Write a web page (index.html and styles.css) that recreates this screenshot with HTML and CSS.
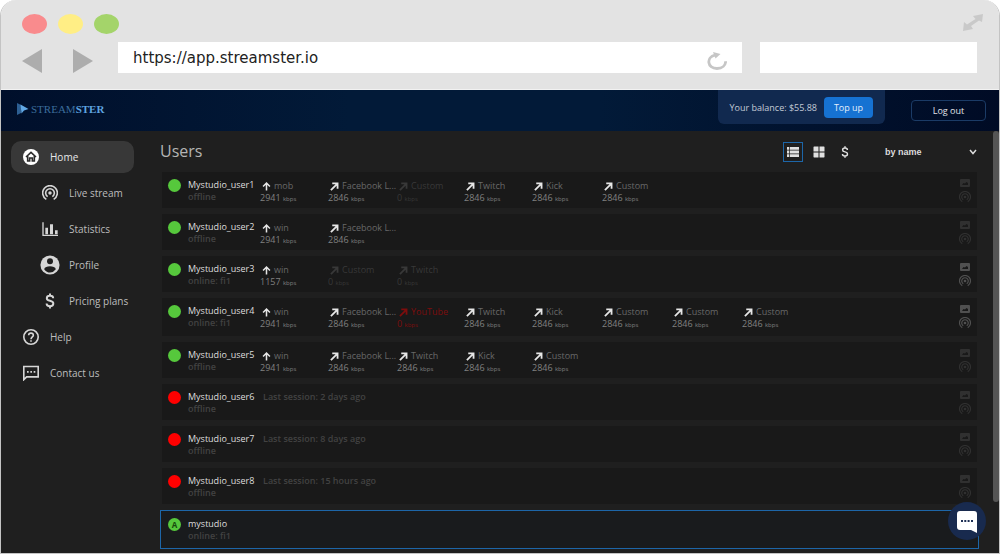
FILE: index.html
```html
<!DOCTYPE html>
<html lang="en">
<head>
  <meta charset="UTF-8">
  <meta name="viewport" content="width=device-width, initial-scale=1.0">
  <title>Streamster - Users</title>
  <link rel="stylesheet" href="styles.css">
</head>
<body>
  <svg class="sprite" aria-hidden="true">
    <symbol id="up" viewBox="0 0 10 10"><path d="M5 9.5V1.5M1.2 5L5 1.2L8.8 5" fill="none" stroke="currentColor" stroke-width="1.7"/></symbol>
    <symbol id="out" viewBox="0 0 10 10"><path d="M1 9L8 2M2.5 1.6H8.4V7.5" fill="none" stroke="currentColor" stroke-width="2"/></symbol>
    <symbol id="cast" viewBox="0 0 24 24"><path d="M6.500 21.500A11 11 0 1 1 17.500 21.500M8.500 17.500A6.500 6.500 0 1 1 15.500 17.500" fill="none" stroke="currentColor" stroke-width="2.400"/><circle cx="12" cy="12" r="2.600" fill="currentColor"/></symbol>
    <symbol id="picture" viewBox="0 0 20 16"><path fill="currentColor" fill-rule="evenodd" d="M2 0H18Q20 0 20 2V14Q20 16 18 16H2Q0 16 0 14V2Q0 0 2 0ZM4 12H16V8L13 6L10 9L7 8Z"/></symbol>
    <symbol id="dollar" viewBox="0 0 12 20"><path d="M10 6.500C10 4.200 8.300 3.500 6 3.500S2 4.500 2 6.500C2 11 10.200 8.500 10.200 13.200C10.200 15.500 8.300 16.500 6 16.500S1.700 15.500 1.700 13.200M6 .5V4M6 16V19.500" fill="none" stroke="currentColor" stroke-width="2.500"/></symbol>
  </svg>

  <div class="window">
    <div class="chrome">
      <div class="chrome-top">
        <div class="dots">
          <span class="dot dot-red"></span>
          <span class="dot dot-yellow"></span>
          <span class="dot dot-green"></span>
        </div>
        <svg class="expand" viewBox="0 0 20 17"><path fill="#c9c9c9" d="M10 2L20 0L19 8L16 6.500L8 12L10 15L0 17L1 8L4 10.500L12.500 5Z"/></svg>
      </div>
      <div class="chrome-bar">
        <button class="nav-arrow" aria-label="Back"><svg viewBox="0 0 20 24"><path d="M20 0V24L0 12Z" fill="#adadad"/></svg></button>
        <button class="nav-arrow" aria-label="Forward"><svg viewBox="0 0 20 24"><path d="M0 0V24L20 12Z" fill="#adadad"/></svg></button>
        <div class="address">
          <input type="text" aria-label="Address" value="https://app.streamster.io">
          <button class="reload" aria-label="Reload"><svg viewBox="0 0 20 18"><path d="M8 3.200C-1 5 0 16.500 10 16.500C15.500 16.500 18.500 13 18.700 9.200" fill="none" stroke="#c6c6c6" stroke-width="2.800"/><path d="M6 0L13.500 2L8.500 6.500Z" fill="#c6c6c6"/></svg></button>
        </div>
        <input class="search" type="text" aria-label="Search">
      </div>
    </div>

    <header class="header">
      <a class="logo" href="#">
        <svg viewBox="0 0 12 12"><path d="M0 0L4 2V10L0 12Z" fill="#2d5f93"/><path d="M3.500 1.500L11.500 6L7 7.500L4.500 10.500Z" fill="#62a9e6"/></svg>
        <span class="logo-text">STREAM<b>STER</b></span>
      </a>
      <div class="balance">
        <span>Your balance: $55.88</span>
        <button class="top-up">Top up</button>
      </div>
      <button class="log-out">Log out</button>
    </header>

    <div class="content">
      <nav class="sidebar">
        <a class="item active" href="#">
          <svg viewBox="0 0 24 24"><circle cx="12" cy="12" r="12" fill="#fff"/><path d="M4.500 12L12 5L19.500 12M7 10.500V18H10V13.500H14V18H17V10.500" fill="none" stroke="#2c2c2c" stroke-width="2.400"/></svg>
          <span>Home</span>
        </a>
        <a class="item sub" href="#">
          <svg viewBox="0 0 24 24"><use href="#cast"/></svg>
          <span>Live stream</span>
        </a>
        <a class="item sub" href="#">
          <svg viewBox="0 0 24 24"><path d="M1.500 2V21.500H24" fill="none" stroke="currentColor" stroke-width="2"/><path d="M5 10H9V20H5ZM12 5H16.500V20H12ZM19.500 14H23.500V20H19.500Z" fill="currentColor"/></svg>
          <span>Statistics</span>
        </a>
        <a class="item sub big" href="#">
          <svg viewBox="0 0 24 24"><circle cx="12" cy="12" r="11.500" fill="currentColor"/><circle cx="12" cy="7.500" r="3.600" fill="#1f1f1f"/><path d="M5 17C6 12.500 18 12.500 19 17Q16 21 12 21T5 17Z" fill="#1f1f1f"/></svg>
          <span>Profile</span>
        </a>
        <a class="item sub" href="#">
          <svg viewBox="0 0 12 20"><use href="#dollar"/></svg>
          <span>Pricing plans</span>
        </a>
        <a class="item" href="#">
          <svg viewBox="0 0 24 24"><circle cx="12" cy="12" r="10.800" fill="none" stroke="currentColor" stroke-width="2.400"/><path d="M8.500 9.500C8.500 5 15.500 5 15.500 9.500C15.500 12 12 12 12 15.500M12 16.800V19" fill="none" stroke="currentColor" stroke-width="2.400"/></svg>
          <span>Help</span>
        </a>
        <a class="item" href="#">
          <svg viewBox="0 0 24 24"><path d="M1.200 22V2.200H22.800V17.800H5.500Z" fill="none" stroke="currentColor" stroke-width="2.400"/><path d="M6 9H8.500V11.500H6ZM11 9H13.500V11.500H11ZM16 9H18.500V11.500H16Z" fill="currentColor"/></svg>
          <span>Contact us</span>
        </a>
      </nav>

      <main class="main">
        <div class="toolbar">
          <h1>Users</h1>
          <button class="view selected" aria-label="List view"><svg viewBox="0 0 12 10"><path fill="currentColor" d="M0 0H2.300V2.800H0ZM3 0H12V2.800H3ZM0 3.600H2.300V6.400H0ZM3 3.600H12V6.400H3ZM0 7.200H2.300V10H0ZM3 7.200H12V10H3Z"/></svg></button>
          <button class="view" aria-label="Grid view"><svg viewBox="0 0 12 12"><path fill="currentColor" d="M1 .5H5.500V5.500H.5V1ZM6.500 .5H11L11.500 1V5.500H6.500ZM.5 6.500H5.500V11.500H1L.5 11ZM6.500 6.500H11.500V11L11 11.500H6.500Z"/></svg></button>
          <button class="view" aria-label="Balance view"><svg viewBox="0 0 12 20"><use href="#dollar"/></svg></button>
          <div class="sort">
            <select aria-label="Sort users">
              <option>by name</option>
              <option>by status</option>
            </select>
            <svg viewBox="0 0 8 6"><path d="M1 1L4 4.500L7 1" fill="none" stroke="currentColor" stroke-width="1.500"/></svg>
          </div>
        </div>
        <div class="users" id="users"></div>
      </main>
      <div class="scroll"><div class="thumb"></div></div>
      <button class="chat" aria-label="Open chat">
        <svg viewBox="0 0 20 22"><path d="M3 0H17Q20 0 20 3V22L14 19H3Q0 19 0 16V3Q0 0 3 0Z" fill="#fff"/><path d="M4 9H6V11H4ZM7.300 9H9.300V11H7.300ZM10.600 9H12.600V11H10.600ZM14 9H16V11H14Z" fill="#1d2f55"/></svg>
      </button>
    </div>
  </div>

  <script>
    const fb = ['Facebook L...', 2846];
    const twitch = ['Twitch', 2846];
    const kick = ['Kick', 2846];
    const custom = ['Custom', 2846];
    const customOff = ['Custom', 0, 'off'];

    const users = [
      { name: 'Mystudio_user1', status: 'offline', up: ['mob', 2941], out: [fb, customOff, twitch, kick, custom] },
      { name: 'Mystudio_user2', status: 'offline', up: ['win', 2941], out: [fb] },
      { name: 'Mystudio_user3', status: 'online: fi1', up: ['win', 1157], out: [customOff, ['Twitch', 0, 'off']] },
      { name: 'Mystudio_user4', status: 'online: fi1', up: ['win', 2941], out: [fb, ['YouTube', 0, 'error'], twitch, kick, custom, custom, custom], cls: 'tall' },
      { name: 'Mystudio_user5', status: 'offline', up: ['win', 2941], out: [fb, twitch, kick, custom] },
      { name: 'Mystudio_user6', status: 'offline', last: '2 days ago' },
      { name: 'Mystudio_user7', status: 'offline', last: '8 days ago' },
      { name: 'Mystudio_user8', status: 'offline', last: '15 hours ago' },
      { name: 'mystudio', status: 'online: fi1', admin: true, cls: 'current' }
    ];

    const stream = (icon, [label, rate, state = '']) => `
      <div class="stream ${state}">
        <div class="target"><svg><use href="#${icon}"/></svg><span>${label}</span></div>
        <div class="rate">${rate} <small>kbps</small></div>
      </div>`;

    const row = (user) => `
      <div class="user ${user.cls || ''}">
        <span class="status ${user.last ? 'red' : ''}">${user.admin ? 'A' : ''}</span>
        <div class="who">
          <div class="name">${user.name}</div>
          <div class="state">${user.status}</div>
        </div>
        ${user.last ? `<div class="last">Last session: ${user.last}</div>` : ''}
        <div class="streams">
          ${user.up ? stream('up', user.up) : ''}
          ${(user.out || []).map((s) => stream('out', s)).join('')}
        </div>
        ${user.admin ? '' : `<div class="tools ${user.status === 'offline' ? '' : 'on'}">
          <svg class="pic"><use href="#picture"/></svg>
          <svg class="cast"><use href="#cast"/></svg>
        </div>`}
      </div>`;

    document.getElementById('users').innerHTML = users.map(row).join('');
  </script>
</body>
</html>
```
FILE: styles.css
```css
* {
  margin: 0;
  padding: 0;
  box-sizing: border-box;
}

body {
  background-color: #fff;
  color: #bdbdbd;
  font-family: 'Open Sans', 'Noto Sans', sans-serif;
  font-size: 9px;
}

button, input, select {
  border: none;
  background: none;
  color: inherit;
  font: inherit;
}

button {
  cursor: pointer;
}

a {
  color: inherit;
  text-decoration: none;
}

svg {
  display: block;
}

.sprite {
  display: none;
}

.window {
  height: 100vh;
  display: flex;
  flex-direction: column;
  border: 1px solid #c4c4c4;
  border-top: none;
  border-radius: 16px 16px 0 0;
  overflow: hidden;
}

/* browser frame */
.chrome {
  background-color: #e3e3e3;
  padding: 14px 22px 16px 21px;
  border-bottom: 1px solid #f2f2f2;
}

.chrome-top {
  display: flex;
  justify-content: space-between;
  margin: 0 -6px 8px 0;
}

.dots {
  display: flex;
  gap: 11px;
}

.dot {
  width: 25px;
  height: 20px;
  border-radius: 50%;
}

.dot-red { background-color: #f98b8d; }
.dot-yellow { background-color: #ffee85; }
.dot-green { background-color: #a4d46a; }

.expand {
  width: 20px;
  height: 17px;
}

.chrome-bar {
  display: flex;
  align-items: center;
}

.nav-arrow {
  width: 20px;
  height: 24px;
  margin: 7px 31px 0 0;
}

.nav-arrow + .nav-arrow {
  margin-right: 25px;
}

.address {
  flex: 23 1 0;
  min-width: 0;
  height: 31px;
  display: flex;
  align-items: center;
  background-color: #fff;
}

.address input {
  flex: 1;
  min-width: 0;
  padding-left: 15px;
  color: #222;
  font-family: 'DejaVu Sans', sans-serif;
  font-size: 15px;
}

.reload {
  width: 20px;
  height: 18px;
  margin: 6px 15px 0 0;
}

.search {
  flex: 8 1 0;
  min-width: 0;
  height: 31px;
  margin-left: 18px;
  background-color: #fff;
}

/* top bar */
.header {
  height: 41px;
  padding: 0 13px 0 16px;
  display: flex;
  align-items: flex-start;
  background: linear-gradient(90deg, #000f2b, #021a38 35%, #021a38 60%, #000b25);
}

.logo {
  display: flex;
  align-items: center;
  gap: 2px;
  margin: 12px auto 0 0;
}

.logo svg {
  width: 12px;
  height: 12px;
}

.logo-text {
  color: #3b6c9b;
  font-family: 'Liberation Serif', serif;
  font-size: 11px;
  line-height: 14px;
}

.logo-text b {
  color: #5fa5e0;
}

.balance {
  height: 34px;
  padding: 0 12px;
  display: flex;
  align-items: center;
  gap: 7px;
  border-radius: 0 0 6px 6px;
  background-color: #11294f;
  color: #c3cad6;
}

.top-up {
  width: 49px;
  height: 21px;
  border-radius: 4px;
  background-color: #1672d2;
  color: #e4effb;
  font-weight: 500;
}

.log-out {
  width: 75px;
  height: 21px;
  margin: 10px 0 0 26px;
  border: 1px solid #1b3b66;
  border-radius: 4px;
  color: #e0e4ea;
  font-weight: 500;
}

.content {
  flex: 1;
  min-height: 0;
  display: flex;
  position: relative;
  background-color: #1f1f1f;
}

/* menu */
.sidebar {
  width: 149px;
  padding: 10px 16px 0 10px;
  display: flex;
  flex-direction: column;
  gap: 4px;
  font-size: 10px;
}

.item {
  height: 32px;
  padding-left: 12px;
  display: flex;
  align-items: center;
  gap: 11px;
  border-radius: 10px;
}

.item svg {
  width: 16px;
  height: 16px;
  color: #d6d6d6;
}

.item.sub {
  padding-left: 31px;
}

.item.big svg {
  width: 20px;
  height: 20px;
  margin: 0 -2px;
}

.item.active {
  background-color: #383838;
  color: #e8e8e8;
}

/* users list */
.main {
  flex: 1;
  min-width: 0;
  padding: 8px 16px 0 12px;
}

.toolbar {
  height: 26px;
  margin: 0 0 7px -2px;
  display: flex;
  align-items: center;
}

.toolbar h1 {
  margin: 0 auto 3px 0;
  color: #b4b4b4;
  font-size: 16px;
  font-weight: 400;
  line-height: 22px;
}

.view {
  width: 20px;
  height: 20px;
  margin-right: 6px;
  display: flex;
  align-items: center;
  justify-content: center;
  color: #e0e0e0;
}

.view svg {
  width: 12px;
  height: 12px;
}

.view.selected {
  border: 1px solid #1d66a8;
}

.sort {
  margin-left: 24px;
  display: flex;
  align-items: center;
  color: #dcdcdc;
}

.sort select {
  width: 84px;
  appearance: none;
  font-family: 'Liberation Sans', sans-serif;
  font-size: 9px;
  font-weight: 700;
}

.sort svg {
  width: 8px;
  height: 6px;
}

.users {
  display: flex;
  flex-direction: column;
  gap: 6px;
}

.user {
  height: 36px;
  padding: 0 6px;
  display: flex;
  align-items: flex-start;
  background-color: #191919;
}

.user.tall {
  height: 38px;
}

.user.current {
  height: 39px;
  margin: 0 -2px;
  padding: 0 7px;
  border: 1px solid #1d66a8;
  background-color: #191b1d;
}

.status {
  width: 13px;
  height: 13px;
  margin-top: 7px;
  border-radius: 50%;
  background-color: #56c83c;
  color: #174a0c;
  font-size: 8px;
  font-weight: 700;
  line-height: 13px;
  text-align: center;
}

.status.red {
  background-color: #f00;
}

.who {
  width: 72px;
  margin: 7px 0 0 7px;
  line-height: 12px;
}

.name {
  color: #dedede;
  font-weight: 500;
}

.state, .last {
  color: #424242;
  font-weight: 600;
}

.last {
  margin: 7px 0 0 3px;
  line-height: 12px;
}

.streams {
  flex: 1;
  display: grid;
  grid-template-columns: 68px 69px 67px 68px 70px 70px 70px 70px;
  margin-top: 8px;
}

.stream {
  color: #808080;
  line-height: 12px;
}

.target {
  display: flex;
  align-items: center;
  gap: 3px;
  margin-left: 2px;
  color: #686868;
  white-space: nowrap;
}

.target svg {
  width: 9px;
  height: 9px;
  color: #e6e6e6;
}

.rate small {
  font-size: 6px;
}

.stream.off, .stream.off * {
  color: #383838;
}

.stream.error, .stream.error * {
  color: #7d0d0d;
}

.tools {
  display: flex;
  flex-direction: column;
  align-items: center;
  gap: 4px;
  margin-top: 7px;
  color: #303030;
}

.tools.on {
  color: #505050;
}

.pic {
  width: 10px;
  height: 8px;
}

.cast {
  width: 12px;
  height: 12px;
}

.scroll {
  width: 6px;
}

.thumb {
  height: 88%;
  border-radius: 3px;
  background-color: #555;
}

/* support chat */
.chat {
  position: absolute;
  right: 13px;
  bottom: 13px;
  width: 38px;
  height: 38px;
  border-radius: 50%;
  background-color: #182a4e;
}

.chat svg {
  width: 20px;
  height: 22px;
  margin: 2px auto 0;
}
```
